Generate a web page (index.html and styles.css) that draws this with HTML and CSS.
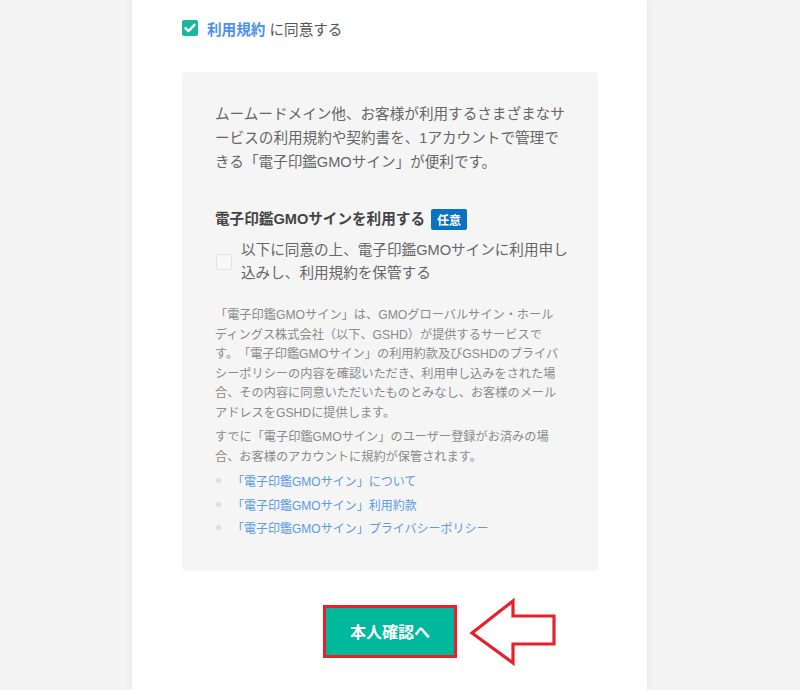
FILE: index.html
```html
<!DOCTYPE html>
<html lang="ja">
<head>
<meta charset="utf-8">
<title>本人確認へ</title>
<link rel="stylesheet" href="styles.css">
</head>
<body>
<div class="card">
  <label class="agree">
    <span class="check on">
      <svg width="12" height="10" viewBox="0 0 12 10"><path d="M1.5 5.2 L4.6 8 L10.5 1.8" fill="none" stroke="#fff" stroke-width="2.4" stroke-linecap="round" stroke-linejoin="round"/></svg>
    </span>
    <span class="agree-text"><a class="terms">利用規約</a> に同意する</span>
  </label>

  <div class="panel">
    <p class="lead">ムームードメイン他、お客様が利用するさまざまなサ<br>ービスの利用規約や契約書を、1アカウントで管理で<br>きる「電子印鑑GMOサイン」が便利です。</p>

    <div class="heading">
      <span>電子印鑑GMOサインを利用する</span>
      <span class="badge">任意</span>
    </div>

    <label class="opt">
      <span class="check off"></span>
      <span class="opt-text">以下に同意の上、電子印鑑GMOサインに利用申し<br>込みし、利用規約を保管する</span>
    </label>

    <p class="note">「電子印鑑GMOサイン」は、GMOグローバルサイン・ホール<br>ディングス株式会社（以下、GSHD）が提供するサービスで<br>す。「電子印鑑GMOサイン」の利用約款及びGSHDのプライバ<br>シーポリシーの内容を確認いただき、利用申し込みをされた場<br>合、その内容に同意いただいたものとみなし、お客様のメール<br>アドレスをGSHDに提供します。</p>
    <p class="note second">すでに「電子印鑑GMOサイン」のユーザー登録がお済みの場<br>合、お客様のアカウントに規約が保管されます。</p>

    <ul class="links">
      <li><a>「電子印鑑GMOサイン」について</a></li>
      <li><a>「電子印鑑GMOサイン」利用約款</a></li>
      <li><a>「電子印鑑GMOサイン」プライバシーポリシー</a></li>
    </ul>
  </div>

  <div class="actions">
    <div class="btn-wrap">
      <button class="submit">本人確認へ</button>
      <svg class="arrow" width="88" height="68" viewBox="0 0 88 68"><polygon points="2,35 43,3 43,18 84,18 84,46 43,46 43,65" fill="#fff" stroke="#e8202a" stroke-width="3.2" stroke-linejoin="miter"/></svg>
    </div>
  </div>
</div>
</body>
</html>
```

FILE: styles.css
```css
* { box-sizing: border-box; }
html, body { margin: 0; padding: 0; }
body {
  background: #f4f4f4;
  font-family: "Liberation Sans", "Noto Sans CJK JP", sans-serif;
  color: #555;
  min-height: 690px;
  text-spacing-trim: space-all;
}
.card {
  width: 515px;
  margin-left: 132px;
  min-height: 690px;
  background: #fff;
  box-shadow: 0 0 10px rgba(0,0,0,0.07);
  padding: 17px 49px 30px 50px;
}
.agree {
  display: flex;
  align-items: center;
  gap: 9px;
  height: 22px;
  font-size: 14.6px;
  color: #555;
}
.check {
  display: inline-flex;
  align-items: center;
  justify-content: center;
  flex: none;
  border-radius: 2px;
}
.check.on {
  width: 16px;
  height: 16px;
  background: #16b99b;
}
.check.off {
  width: 16px;
  height: 16px;
  border: 1px solid #e2e2e2;
  background: #f7f7f7;
}
.terms {
  color: #4d8ff2;
  font-weight: bold;
}
.panel {
  margin-top: 33px;
  background: #f5f5f5;
  border-radius: 4px;
  padding: 30px 27px 31px 33px;
}
.lead {
  margin: 0;
  font-size: 14.6px;
  line-height: 24px;
  color: #666;
  white-space: nowrap;
}
.heading {
  margin-top: 31px;
  display: flex;
  align-items: center;
  gap: 6px;
  height: 24px;
  font-size: 14.6px;
  font-weight: bold;
  color: #444;
}
.badge {
  display: inline-flex;
  align-items: center;
  height: 21px;
  padding: 0 6px;
  margin-top: 4px;
  background: #0b72c2;
  color: #fff;
  font-size: 12px;
  border-radius: 2px;
}
.opt {
  margin-top: 10px;
  display: flex;
  align-items: center;
  gap: 9px;
  padding-left: 1px;
}
.opt-text {
  font-size: 14.6px;
  line-height: 23px;
  color: #666;
  white-space: nowrap;
}
.note {
  margin: 21px 0 0;
  font-size: 12.2px;
  line-height: 19.5px;
  color: #8a8a8a;
  white-space: nowrap;
}
.note.second { margin-top: 5px; }
.links {
  list-style: none;
  margin: 2px 0 0;
  padding: 0;
}
.links li {
  display: flex;
  align-items: center;
  height: 23.5px;
  font-size: 12px;
}
.links li::before {
  content: "";
  width: 5px;
  height: 5px;
  border-radius: 50%;
  background: #dedede;
  margin: 0 11px 0 1px;
  flex: none;
}
.links a { color: #5a9ae8; }
.actions {
  display: flex;
  justify-content: center;
  margin-top: 34px;
}
.btn-wrap { position: relative; }
.submit {
  width: 134px;
  height: 53px;
  background: #00b99c;
  border: 3px solid #e8202a;
  color: #fff;
  font-family: "Liberation Sans", "Noto Sans CJK JP", sans-serif;
  font-weight: bold;
  font-size: 16px;
  padding: 0;
  display: block;
}
.arrow {
  position: absolute;
  left: 147px;
  top: -7px;
}
```
